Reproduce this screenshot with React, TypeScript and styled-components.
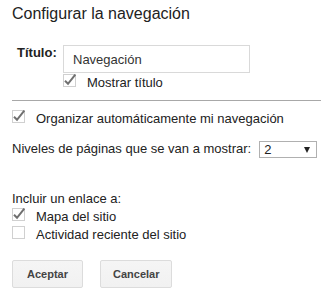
import React from 'react';
import styled, { createGlobalStyle } from 'styled-components';

const Global = createGlobalStyle`
  html, body { margin: 0; padding: 0; background: #fff; }
  body {
    font-family: "Liberation Sans", Arial, sans-serif;
    font-size: 13px;
    color: #222;
  }
`;

const Dialog = styled.div`
  width: 321px;
  height: 297px;
  box-sizing: border-box;
  padding: 4px 0 0 12px;
  overflow: hidden;
`;

const Heading = styled.h1`
  margin: 0;
  font-size: 16px;
  font-weight: normal;
  line-height: 19px;
  color: #222;
`;

const TitleRow = styled.div`
  display: grid;
  grid-template-columns: 51px 187px;
  margin-top: 22px;
`;

const FieldLabel = styled.label`
  font-weight: bold;
  line-height: 15px;
  padding-left: 5px;
`;

const FieldStack = styled.div`
  display: flex;
  flex-direction: column;
`;

const TextInput = styled.input`
  box-sizing: border-box;
  width: 187px;
  height: 28px;
  margin: 0;
  border: 1px solid #d9d9d9;
  padding: 0 0 0 9px;
  font: 13px "Liberation Sans", Arial, sans-serif;
  color: #333;
  outline: none;
`;

const CheckRow = styled.label<{ $top: number }>`
  display: flex;
  align-items: baseline;
  gap: 11px;
  height: 15px;
  line-height: 15px;
  margin-top: ${(p) => p.$top}px;
`;

const Divider = styled.hr`
  margin: 10px 0 0 0;
  border: 0;
  height: 1px;
  background: #a8a8a8;
`;

const LevelsRow = styled.div`
  display: flex;
  align-items: flex-start;
  gap: 8px;
  margin-top: 15px;
  line-height: 15px;
`;

const SelectBox = styled.div`
  box-sizing: border-box;
  width: 58px;
  height: 17px;
  border: 1px solid #b0b0b0;
  padding: 0 6px 0 4px;
  display: flex;
  align-items: center;
  justify-content: space-between;
  line-height: 13px;
  background: #fff;
`;

const SelectValue = styled.span`
  color: #222;
`;

const Arrow = styled.span`
  width: 0;
  height: 0;
  border-left: 3px solid transparent;
  border-right: 3px solid transparent;
  border-top: 6px solid #222;
`;

const SectionLabel = styled.div`
  margin-top: 33px;
  line-height: 15px;
`;

const Buttons = styled.div`
  display: flex;
  gap: 17px;
  margin-top: 18px;
`;

const Button = styled.button`
  box-sizing: border-box;
  height: 28px;
  min-width: 71px;
  padding: 0 12px;
  border: 1px solid #dcdcdc;
  border-radius: 2px;
  background: linear-gradient(#f5f5f5, #f1f1f1);
  color: #444;
  font: bold 11px "Liberation Sans", Arial, sans-serif;
  cursor: pointer;
`;

const CheckSvg = styled.svg`
  flex: none;
  overflow: visible;
  margin-top: -2px;
`;

function CheckBox({ checked }: { checked: boolean }) {
  return (
    <CheckSvg width="13" height="13" viewBox="0 0 13 13">
      <rect x="0.5" y="0.5" width="12" height="12" fill="#fff" stroke="#d0d0d0" />
      {checked && (
        <path d="M2 6.8 L5 9.8 L12.3 0.6" fill="none" stroke="#707070" strokeWidth="2" />
      )}
    </CheckSvg>
  );
}

export default function App() {
  return (
    <>
      <Global />
      <Dialog>
        <Heading>Configurar la navegación</Heading>
        <TitleRow>
          <FieldLabel>Título:</FieldLabel>
          <FieldStack>
            <TextInput defaultValue="Navegación" />
            <CheckRow $top={2}>
              <CheckBox checked />
              Mostrar título
            </CheckRow>
          </FieldStack>
        </TitleRow>
        <Divider />
        <CheckRow $top={10}>
          <CheckBox checked />
          Organizar automáticamente mi navegación
        </CheckRow>
        <LevelsRow>
          <span>Niveles de páginas que se van a mostrar:</span>
          <SelectBox role="listbox">
            <SelectValue>2</SelectValue>
            <Arrow />
          </SelectBox>
        </LevelsRow>
        <SectionLabel>Incluir un enlace a:</SectionLabel>
        <CheckRow $top={3}>
          <CheckBox checked />
          Mapa del sitio
        </CheckRow>
        <CheckRow $top={3}>
          <CheckBox checked={false} />
          Actividad reciente del sitio
        </CheckRow>
        <Buttons>
          <Button>Aceptar</Button>
          <Button>Cancelar</Button>
        </Buttons>
      </Dialog>
    </>
  );
}
